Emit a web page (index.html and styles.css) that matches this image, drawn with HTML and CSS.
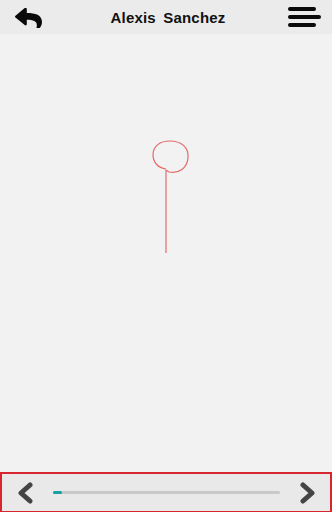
FILE: index.html
```html
<!DOCTYPE html>
<html>
<head>
<meta charset="utf-8">
<link rel="stylesheet" href="styles.css">
</head>
<body>
<div class="app">
  <header class="topbar">
    <button class="icon-btn back" aria-label="Back">
      <svg width="27" height="20" viewBox="0 0 512 400" preserveAspectRatio="none">
        <path d="M8.3 153.8L184.3 1.9C199.7 -11.5 224 -0.7 224 20v80c160.6 1.8 288 34 288 186.3 0 61.4-39.6 122.3-83.3 154.1-13.7 9.9-33.1-2.5-28.1-18.6 45.3-145-21.5-183.5-176.6-185.7V324c0 20.7-24.3 31.5-39.7 18.2l-176-152c-11.1-9.6-11.1-26.8 0-36.4z" fill="#0a0a0a"/>
      </svg>
    </button>
    <h1 class="title">Alexis Sanchez</h1>
    <button class="icon-btn menu" aria-label="Menu">
      <span class="bar short"></span>
      <span class="bar long"></span>
      <span class="bar short"></span>
    </button>
  </header>
  <main class="canvas">
    <svg class="drawing" width="332" height="438" viewBox="0 0 332 438">
      <path d="M166 135 C158 134 153 128 153 121 C153 112 160 107 170 107 C181 107 189 113 188 124 C187 134 179 140 169 138 L166 136" fill="none" stroke="#e46a6a" stroke-width="1.2"/>
      <path d="M166 136 L166 219" fill="none" stroke="#e46a6a" stroke-width="1.2"/>
    </svg>
  </main>
  <footer class="player">
    <button class="icon-btn chev" aria-label="Previous">
      <svg width="22" height="22" viewBox="0 0 22 22"><path d="M15 3 L6 11 L15 19" fill="none" stroke="#444" stroke-width="5" stroke-linecap="round" stroke-linejoin="round"/></svg>
    </button>
    <div class="track"><div class="progress" style="width:4%"></div></div>
    <button class="icon-btn chev" aria-label="Next">
      <svg width="22" height="22" viewBox="0 0 22 22"><path d="M7 3 L16 11 L7 19" fill="none" stroke="#444" stroke-width="5" stroke-linecap="round" stroke-linejoin="round"/></svg>
    </button>
  </footer>
</div>
</body>
</html>
```
FILE: styles.css
```css
* { box-sizing: border-box; }
html, body { margin: 0; padding: 0; }
body {
  width: 332px;
  height: 512px;
  background: #f2f2f2;
  font-family: "Liberation Sans", Arial, sans-serif;
  overflow: hidden;
}
.app {
  display: flex;
  flex-direction: column;
  height: 512px;
}
.topbar {
  height: 34px;
  background: #ebebeb;
  display: flex;
  align-items: center;
  justify-content: space-between;
  padding: 0 10px 0 15px;
  flex: none;
}
.icon-btn {
  border: 0;
  background: none;
  padding: 0;
  margin: 0;
  display: flex;
  align-items: center;
  justify-content: center;
}
.back { width: 27px; height: 20px; margin-top: 1px; }
.title {
  margin: 0;
  font-size: 15px;
  font-weight: bold;
  color: #111;
  letter-spacing: 0.2px;
  word-spacing: 3px;
  padding-left: 6px;
}
.menu {
  flex-direction: column;
  align-items: flex-start;
  gap: 3.5px;
  width: 34px;
}
.bar {
  display: block;
  height: 4.5px;
  background: #0a0a0a;
  border-radius: 3px;
}
.bar.short { width: 28px; }
.bar.long { width: 33px; }
.canvas {
  flex: 1;
  background: #f2f2f2;
}
.drawing { display: block; }
.player {
  height: 41px;
  flex: none;
  background: #e9e9e9;
  border: 2px solid #d8262f;
  display: flex;
  align-items: center;
  padding: 0 12px 0 13px;
  gap: 16px;
}
.chev { width: 22px; height: 22px; }
.track {
  flex: 1;
  height: 3px;
  background: #c9c9c9;
  border-radius: 2px;
}
.progress {
  height: 3px;
  background: #17a0a0;
  border-radius: 2px;
}
```
